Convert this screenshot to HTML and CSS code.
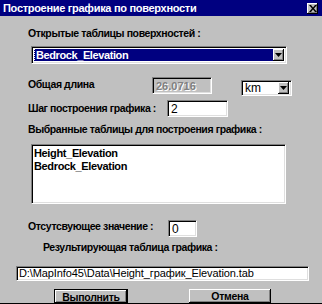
FILE: index.html
```html
<!DOCTYPE html>
<html>
<head>
<meta charset="utf-8">
<link rel="stylesheet" href="styles.css">
</head>
<body>
<div class="window">
  <div class="titlebar">
    <span class="title">Построение графика по поверхности</span>
    <span class="close"><svg width="8" height="7" viewBox="0 0 8 7"><path d="M0 0h2l2 2.5 2-2.5h2l-3 3.5 3 3.5h-2l-2-2.5-2 2.5h-2l3-3.5z" fill="#000"/></svg></span>
  </div>
  <div class="lbl lbl-open">Открытые таблицы поверхностей :</div>
  <div class="combo combo-main">
    <div class="combo-field selected"><span class="focus">Bedrock_Elevation</span></div>
    <div class="drop"><svg width="7" height="4" viewBox="0 0 7 4"><path d="M0 0h7l-3.5 4z" fill="#000"/></svg></div>
  </div>
  <div class="row row-len">
    <div class="lbl lbl-len">Общая длина</div>
    <div class="input disabled w-len">26.0716</div>
    <div class="combo combo-km">
      <div class="combo-field">km</div>
      <div class="drop"><svg width="7" height="4" viewBox="0 0 7 4"><path d="M0 0h7l-3.5 4z" fill="#000"/></svg></div>
    </div>
  </div>
  <div class="row row-step">
    <div class="lbl lbl-step">Шаг построения графика :</div>
    <div class="input w-step">2</div>
  </div>
  <div class="lbl lbl-sel">Выбранные таблицы для построения графика :</div>
  <div class="listbox">
    <div class="item">Height_Elevation</div>
    <div class="item">Bedrock_Elevation</div>
  </div>
  <div class="row row-miss">
    <div class="lbl lbl-miss">Отсутсвующее значение :</div>
    <div class="input w-miss">0</div>
  </div>
  <div class="lbl lbl-res">Результирующая таблица графика :</div>
  <div class="input path">D:\MapInfo45\Data\Height_график_Elevation.tab</div>
  <div class="buttons">
    <div class="btn btn-run">Выполнить</div>
    <div class="btn btn-cancel">Отмена</div>
  </div>
</div>
</body>
</html>
```
FILE: styles.css
```css
html, body { margin: 0; padding: 0; background: #c0c0c0; }
.window {
  width: 322px; height: 304px; box-sizing: border-box;
  background: #c0c0c0; overflow: hidden;
  border-bottom: 1px solid #000;
  font-family: "Liberation Sans", Arial, sans-serif;
  font-size: 11px; color: #000;
}
.titlebar {
  height: 16px; background: #000080; color: #fff;
  display: flex; align-items: center; justify-content: space-between;
  padding: 0 4px 0 3px; font-weight: bold; font-size: 11px;
}
.title { letter-spacing: -0.3px; }
.close {
  width: 11px; height: 11px; background: #c0c0c0;
  box-shadow: inset -1px -1px 0 #000, inset 1px 1px 0 #fff, inset -2px -2px 0 #808080;
  display: flex; align-items: center; justify-content: center;
}
.lbl { font-weight: bold; font-size: 10.5px; height: 13px; line-height: 13px; white-space: nowrap; letter-spacing: -0.4px; }
.lbl-open { margin: 11px 0 0 28px; }
.combo { display: flex; background: #fff; box-sizing: border-box;
  border-top: 1px solid #808080; border-left: 1px solid #808080;
  border-right: 1px solid #fff; border-bottom: 1px solid #fff;
  box-shadow: inset 1px 1px 0 #000, inset -1px -1px 0 #dfdfdf; padding: 2px; }
.combo-main { margin: 6px 0 0 31px; width: 256px; height: 18px; }
.combo-field { flex: 1; display: flex; align-items: center; padding-left: 1px; font-size: 12px; }
.combo-field.selected { background: #000080; color: #fff; font-weight: bold; font-size: 11px; letter-spacing: -0.4px; }
.focus { outline: 1px dotted #fff; outline-offset: 0; padding: 0 1px; height: 12px; line-height: 13px; display: flex; align-items: center; flex: 1; }
.drop { width: 11px; background: #c0c0c0; display: flex; align-items: center; justify-content: center;
  box-shadow: inset -1px -1px 0 #000, inset 1px 1px 0 #fff, inset -2px -2px 0 #808080; }
.row { display: flex; align-items: flex-start; }
.row-len { margin-top: 13px; height: 18px; }
.lbl-len { margin: 1px 0 0 28px; width: 124px; }
.input { box-sizing: border-box; background: #fff; white-space: nowrap; overflow: hidden;
  border-top: 1px solid #808080; border-left: 1px solid #808080;
  border-right: 1px solid #fff; border-bottom: 1px solid #fff;
  box-shadow: inset 1px 1px 0 #000, inset -1px -1px 0 #dfdfdf;
  padding: 0 3px; display: flex; align-items: center; font-size: 12px; }
.disabled { background: #c0c0c0; color: #808080; text-shadow: 1px 1px 0 #fff; font-weight: bold; font-size: 11px; }
.w-len { width: 60px; height: 17px; }
.combo-km { margin: 3px 0 0 29px; width: 51px; height: 16px; padding: 1px 2px; }
.row-step { margin-top: 5px; height: 17px; }
.lbl-step { margin: 2px 0 0 28px; width: 139px; }
.w-step { width: 61px; height: 17px; }
.lbl-sel { margin: 6px 0 0 28px; }
.listbox { margin: 8px 0 0 31px; width: 255px; height: 60px; box-sizing: border-box; background: #fff;
  border-top: 1px solid #808080; border-left: 1px solid #808080;
  border-right: 1px solid #fff; border-bottom: 1px solid #fff;
  box-shadow: inset 1px 1px 0 #000, inset -1px -1px 0 #dfdfdf; padding: 2px 2px; }
.item { font-weight: bold; font-size: 11px; height: 13px; line-height: 13px; letter-spacing: -0.35px; }
.row-miss { margin-top: 16px; height: 17px; }
.lbl-miss { margin: 0 0 0 28px; width: 140px; }
.w-miss { width: 29px; height: 17px; }
.lbl-res { margin: 4px 0 0 43px; }
.path { margin: 12px 0 0 16px; width: 293px; height: 15px; padding: 0 2px; font-size: 11px; line-height: 13px; letter-spacing: -0.1px; }
.buttons { display: flex; margin-top: 8px; }
.btn { box-sizing: border-box; height: 14px; background: #c0c0c0; font-weight: bold; font-size: 10.5px; letter-spacing: -0.3px;
  display: flex; align-items: center; justify-content: center;
  box-shadow: inset -1px -1px 0 #000, inset 1px 1px 0 #fff, inset -2px -2px 0 #808080; }
.btn-run { margin-left: 54px; width: 74px; border: 1px solid #000; height: 15px; }
.btn-cancel { margin-left: 61px; width: 82px; }
```
